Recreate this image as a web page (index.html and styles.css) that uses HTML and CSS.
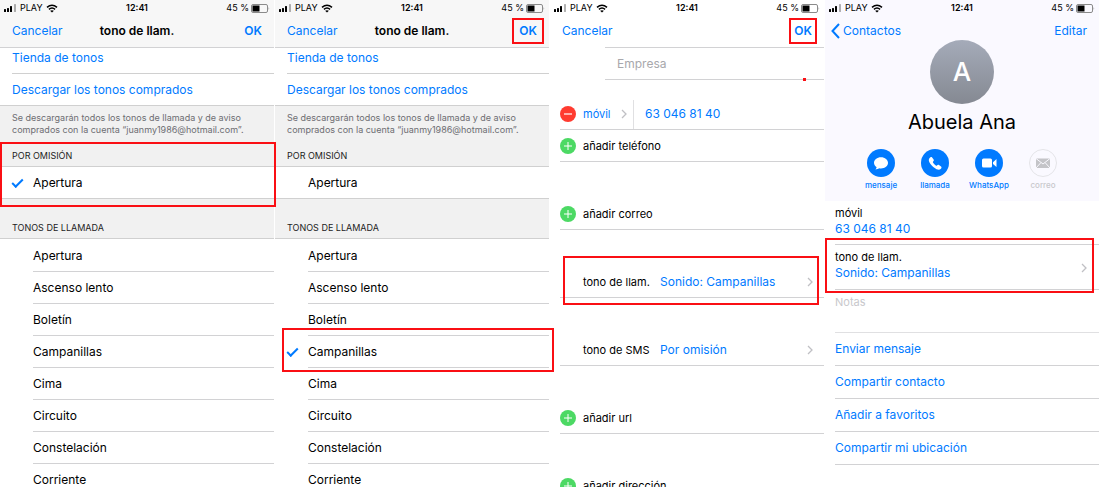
FILE: index.html
```html
<!DOCTYPE html>
<html lang="es">
<head>
  <meta charset="UTF-8">
  <meta name="viewport" content="width=device-width, initial-scale=1">
  <title>Cambiar el tono de llamada de un contacto</title>
  <link rel="stylesheet" href="styles.css">
</head>
<body>

<svg class="sprite" aria-hidden="true">
  <symbol id="signal" viewBox="0 0 13 8">
    <rect x="0" y="5" width="2" height="3" rx=".5"/>
    <rect x="3" y="4" width="2" height="4" rx=".5"/>
    <rect x="6" y="2" width="2" height="6" rx=".5"/>
    <rect x="10" y="0" width="2" height="8" rx=".5" opacity=".3"/>
  </symbol>
  <symbol id="wifi" viewBox="0 0 12 9">
    <path d="M1 3.4Q6-1 11 3.4M2.9 5.4Q6 2.7 9.1 5.4" fill="none" stroke="currentColor" stroke-width="1.5"/>
    <path d="M6 8.6 4.1 6.8Q6 5.5 7.9 6.8Z"/>
  </symbol>
  <symbol id="battery" viewBox="0 0 19 9">
    <rect x=".5" y=".5" width="16" height="8" rx="1.5" fill="none" stroke="#8a8a8a"/>
    <rect x="1.5" y="1.5" width="7" height="6"/>
    <path d="M17.6 3Q18.8 4.500 17.600 6Z" fill="#8a8a8a"/>
  </symbol>
  <symbol id="chevron" viewBox="0 0 6 10">
    <path d="M1 1 5 5 1 9" fill="none" stroke="#c0c0c4" stroke-width="1.3"/>
  </symbol>
  <symbol id="add" viewBox="0 0 16 16">
    <circle cx="8" cy="8" r="8" fill="#4cd964"/>
    <path d="M4 8h8M8 4v8" stroke="#fff" stroke-width="1"/>
  </symbol>
  <symbol id="remove" viewBox="0 0 16 16">
    <circle cx="8" cy="8" r="8" fill="#ff3b30"/>
    <path d="M4 8h8" stroke="#fff" stroke-width="1.2"/>
  </symbol>
</svg>

<main class="screens">

  <!-- Tono por omisión -->
  <section class="screen">
    <div class="topbar">
      <div class="status">
        <span class="carrier"><svg class="i-signal"><use href="#signal"/></svg>PLAY<svg class="i-wifi"><use href="#wifi"/></svg></span>
        <span class="clock">12:41</span>
        <span class="power">45 %<svg class="i-battery"><use href="#battery"/></svg></span>
      </div>
      <header class="nav">
        <button type="button">Cancelar</button>
        <h1>tono de llam.</h1>
        <button type="button" class="ok">OK</button>
      </header>
    </div>
    <div class="store">
      <button type="button" class="row first">Tienda de tonos</button>
      <button type="button" class="row">Descargar los tonos comprados</button>
    </div>
    <p class="note">Se descargarán todos los tonos de llamada y de aviso comprados con la cuenta “juanmy1986@hotmail.com”.</p>
    <div class="default mark mark-default">
      <h2>POR OMISIÓN</h2>
      <label class="tone"><input type="radio" name="tono1" checked><span>Apertura</span></label>
    </div>
    <h2 class="tones-title">TONOS DE LLAMADA</h2>
    <div class="tones">
      <label class="tone"><input type="radio" name="tono1"><span>Apertura</span></label>
      <label class="tone"><input type="radio" name="tono1"><span>Ascenso lento</span></label>
      <label class="tone"><input type="radio" name="tono1"><span>Boletín</span></label>
      <label class="tone"><input type="radio" name="tono1"><span>Campanillas</span></label>
      <label class="tone"><input type="radio" name="tono1"><span>Cima</span></label>
      <label class="tone"><input type="radio" name="tono1"><span>Circuito</span></label>
      <label class="tone"><input type="radio" name="tono1"><span>Constelación</span></label>
      <label class="tone"><input type="radio" name="tono1"><span>Corriente</span></label>
    </div>
  </section>

  <!-- Tono elegido -->
  <section class="screen">
    <div class="topbar">
      <div class="status">
        <span class="carrier"><svg class="i-signal"><use href="#signal"/></svg>PLAY<svg class="i-wifi"><use href="#wifi"/></svg></span>
        <span class="clock">12:41</span>
        <span class="power">45 %<svg class="i-battery"><use href="#battery"/></svg></span>
      </div>
      <header class="nav">
        <button type="button">Cancelar</button>
        <h1>tono de llam.</h1>
        <button type="button" class="ok mark mark-ok">OK</button>
      </header>
    </div>
    <div class="store">
      <button type="button" class="row first">Tienda de tonos</button>
      <button type="button" class="row">Descargar los tonos comprados</button>
    </div>
    <p class="note">Se descargarán todos los tonos de llamada y de aviso comprados con la cuenta “juanmy1986@hotmail.com”.</p>
    <div class="default">
      <h2>POR OMISIÓN</h2>
      <label class="tone"><input type="radio" name="tono2"><span>Apertura</span></label>
    </div>
    <h2 class="tones-title">TONOS DE LLAMADA</h2>
    <div class="tones">
      <label class="tone"><input type="radio" name="tono2"><span>Apertura</span></label>
      <label class="tone"><input type="radio" name="tono2"><span>Ascenso lento</span></label>
      <label class="tone"><input type="radio" name="tono2"><span>Boletín</span></label>
      <label class="tone mark mark-tone"><input type="radio" name="tono2" checked><span>Campanillas</span></label>
      <label class="tone"><input type="radio" name="tono2"><span>Cima</span></label>
      <label class="tone"><input type="radio" name="tono2"><span>Circuito</span></label>
      <label class="tone"><input type="radio" name="tono2"><span>Constelación</span></label>
      <label class="tone"><input type="radio" name="tono2"><span>Corriente</span></label>
    </div>
  </section>

  <!-- Editar contacto -->
  <section class="screen edit">
    <div class="status">
      <span class="carrier"><svg class="i-signal"><use href="#signal"/></svg>PLAY<svg class="i-wifi"><use href="#wifi"/></svg></span>
      <span class="clock">12:41</span>
      <span class="power">45 %<svg class="i-battery"><use href="#battery"/></svg></span>
    </div>
    <header class="nav">
      <button type="button">Cancelar</button>
      <button type="button" class="ok mark mark-ok2">OK</button>
    </header>
    <div class="company">
      <input type="text" placeholder="Empresa" aria-label="Empresa">
    </div>
    <div class="group">
      <div class="field">
        <button type="button" class="icon" aria-label="Eliminar"><svg><use href="#remove"/></svg></button>
        <label class="kind" for="tel">móvil</label>
        <svg class="i-chevron"><use href="#chevron"/></svg>
        <input type="tel" id="tel" value="63 046 81 40">
      </div>
      <button type="button" class="field"><svg class="i-add"><use href="#add"/></svg>añadir teléfono</button>
    </div>
    <div class="group">
      <button type="button" class="field"><svg class="i-add"><use href="#add"/></svg>añadir correo</button>
    </div>
    <div class="group">
      <button type="button" class="field sound mark mark-sound"><span class="name">tono de llam.</span><span class="value">Sonido: Campanillas</span><svg class="i-chevron"><use href="#chevron"/></svg></button>
    </div>
    <div class="group">
      <button type="button" class="field sound"><span class="name">tono de SMS</span><span class="value">Por omisión</span><svg class="i-chevron"><use href="#chevron"/></svg></button>
    </div>
    <div class="group">
      <button type="button" class="field"><svg class="i-add"><use href="#add"/></svg>añadir url</button>
    </div>
    <div class="group">
      <button type="button" class="field"><svg class="i-add"><use href="#add"/></svg>añadir dirección</button>
    </div>
  </section>

  <!-- Ficha del contacto -->
  <section class="screen contact">
    <div class="card">
      <div class="status">
        <span class="carrier"><svg class="i-signal"><use href="#signal"/></svg>PLAY<svg class="i-wifi"><use href="#wifi"/></svg></span>
        <span class="clock">12:41</span>
        <span class="power">45 %<svg class="i-battery"><use href="#battery"/></svg></span>
      </div>
      <header class="nav">
        <button type="button" class="back"><svg viewBox="0 0 9 16"><path d="M8 1 1.500 8 8 15" fill="none" stroke="currentColor" stroke-width="2"/></svg>Contactos</button>
        <button type="button">Editar</button>
      </header>
      <div class="avatar">A</div>
      <h1 class="fullname">Abuela Ana</h1>
      <div class="actions">
        <button type="button">
          <svg viewBox="0 0 28 28"><circle cx="14" cy="14" r="14" fill="#007aff"/><path d="M14 8.200c-4 0-7 2.500-7 5.600 0 1.900 1 3.500 2.600 4.400-.1.900-.6 1.700-1.200 2.200 1.500 0 2.800-.5 3.700-1.200.6.200 1.200.2 1.900.2 4 0 7-2.500 7-5.600s-3-5.600-7-5.600z" fill="#fff"/></svg>
          mensaje
        </button>
        <button type="button">
          <svg viewBox="0 0 28 28"><circle cx="14" cy="14" r="14" fill="#007aff"/><path d="M8.600 8.900c.9-1 1.900-1.200 2.500-.4l1.500 2c.5.7.3 1.400-.5 2.100-.4.300-.3.700 0 1.200.7 1.100 1.700 2 2.700 2.700.5.300.9.300 1.200-.1.600-.8 1.300-.9 2-.4l2 1.400c.9.700.5 1.700-.4 2.600-1.300 1.300-3.700.9-7-1.800-3.700-3.100-6.100-7.200-4-9.300z" fill="#fff"/></svg>
          llamada
        </button>
        <button type="button">
          <svg viewBox="0 0 28 28"><circle cx="14" cy="14" r="14" fill="#007aff"/><rect x="7" y="9.500" width="10" height="9" rx="1.500" fill="#fff"/><path d="M18 13.200 21.500 10v8L18 14.900z" fill="#fff"/></svg>
          WhatsApp
        </button>
        <button type="button" disabled>
          <svg viewBox="0 0 28 28"><circle cx="14" cy="14" r="13.500" fill="none" stroke="#e4e4e8"/><rect x="7" y="9.500" width="14" height="9.500" fill="#c4c4c8"/><path d="M7 9.500l7 5.500 7-5.500M7 19l5-5.500M21 19l-5-5.500" fill="none" stroke="#faf9ff" stroke-width="1"/></svg>
          correo
        </button>
      </div>
    </div>
    <div class="details">
      <div class="detail">
        <span>móvil</span>
        <a href="tel:630468140">63 046 81 40</a>
      </div>
      <div class="detail mark mark-detail">
        <span>tono de llam.</span>
        <a href="#tono">Sonido: Campanillas</a>
        <svg class="i-chevron"><use href="#chevron"/></svg>
      </div>
      <textarea class="notes" placeholder="Notas" aria-label="Notas"></textarea>
      <button type="button" class="option">Enviar mensaje</button>
      <button type="button" class="option">Compartir contacto</button>
      <button type="button" class="option">Añadir a favoritos</button>
      <button type="button" class="option">Compartir mi ubicación</button>
    </div>
  </section>

</main>

</body>
</html>
```
FILE: styles.css
```css
* {
  box-sizing: border-box;
}
body {
  margin: 0;
  font-family: Inter, 'Liberation Sans', sans-serif;
  font-size: 12px;
  line-height: 16px;
  color: #000;
  background: #fff;
}
h1, h2, p {
  margin: 0;
}
button, input, textarea {
  font: inherit;
  color: #007aff;
  background: none;
  border: none;
  border-radius: 0;
  padding: 0;
  margin: 0;
  text-align: left;
}
button {
  cursor: pointer;
}
a {
  color: #007aff;
  text-decoration: none;
}
svg {
  display: block;
  flex: none;
}
.sprite {
  position: absolute;
  width: 0;
  height: 0;
}
.screens {
  display: grid;
  grid-template-columns: repeat(4, 1fr);
  height: 100vh;
  overflow: hidden;
}
.screen {
  min-width: 0;
  border-right: 1px solid #fff;
}

/* status bar */
.status {
  display: grid;
  grid-template-columns: 1fr auto 1fr;
  align-items: center;
  height: 16px;
  padding: 0 4px;
  font-size: 9px;
  line-height: 16px;
}
.carrier, .power {
  display: flex;
  align-items: center;
}
.carrier {
  gap: 3px;
}
.power {
  gap: 2px;
  justify-content: flex-end;
}
.clock {
  font-weight: 600;
}
.i-signal { width: 13px; height: 8px; }
.i-wifi { width: 12px; height: 9px; }
.i-battery { width: 19px; height: 9px; }
.i-chevron { width: 6px; height: 10px; }

/* navigation bar */
.topbar {
  background: #f7f7f7;
  border-bottom: 1px solid #d2d2d4;
}
.nav {
  display: grid;
  grid-template-columns: 1fr auto 1fr;
  align-items: center;
  height: 31px;
  padding: 0 12px 2px;
}
.nav h1 {
  font-size: 12px;
  font-weight: 600;
}
.nav button {
  justify-self: start;
}
.nav button:last-child {
  grid-column: 3;
  justify-self: end;
}
.nav .ok {
  font-weight: 600;
}

/* tone list */
.store {
  border-bottom: 1px solid #d0d0d0;
}
.row {
  display: block;
  width: calc(100% - 12px);
  height: 31px;
  margin-left: 12px;
}
.row.first {
  height: 26px;
  padding-bottom: 6px;
  border-bottom: 1px solid #d0d0d0;
}
.note {
  height: 37px;
  padding: 6px 12px 0;
  font-size: 9px;
  line-height: 12px;
  color: #6d6d72;
  background: #f1f1f1;
}
h2 {
  padding: 0 12px;
  font-size: 9px;
  font-weight: 400;
  color: #222;
  background: #f1f1f1;
  border-bottom: 1px solid #d0d0d0;
}
.default h2 {
  height: 24px;
  padding-top: 5px;
}
.default .tone {
  border-bottom: 1px solid #d0d0d0;
}
.tones-title {
  height: 40px;
  padding-top: 21px;
}
.tones {
  padding-top: 1px;
}
.tone {
  display: flex;
  align-items: center;
  height: 32px;
}
.tone input {
  appearance: none;
  width: 33px;
  height: 10px;
}
.tone input:checked::before {
  content: "";
  display: block;
  width: 9px;
  height: 4px;
  margin: 1px 12px;
  border-left: 2px solid #007aff;
  border-bottom: 2px solid #007aff;
  transform: rotate(-45deg);
}
.tone span {
  flex: 1;
}
.tones .tone span {
  line-height: 31px;
  border-bottom: 1px solid #d2d2d4;
}

/* edit contact */
.company {
  position: relative;
  height: 33px;
  margin-left: 55px;
  padding-left: 12px;
  border-top: 1px solid #d2d2d4;
  border-bottom: 1px solid #d2d2d4;
}
.company::after {
  content: "";
  position: absolute;
  right: 18px;
  bottom: -2px;
  width: 3px;
  height: 3px;
  background: #fa0f14;
}
.company input {
  width: 100%;
  height: 30px;
}
::placeholder {
  color: #a8a8ac;
  opacity: 1;
}
.group {
  margin-bottom: 36px;
}
.company + .group {
  margin-top: 18px;
}
.field {
  display: flex;
  align-items: center;
  width: calc(100% - 10px);
  height: 32px;
  margin-left: 10px;
  font-size: 11px;
  color: #000;
  border-bottom: 1px solid #d2d2d4;
}
.field .icon svg, .i-add {
  width: 16px;
  height: 16px;
}
.field .icon, .i-add {
  margin-right: 7px;
}
.kind {
  width: 38px;
  color: #007aff;
}
.field input {
  flex: 1;
  min-width: 0;
  height: 29px;
  margin-left: 6px;
  padding: 0 0 3px 11px;
  align-self: flex-end;
  font-size: 12px;
  border-left: 1px solid #e0e0e2;
}
.sound {
  padding: 0 11px 0 23px;
}
.sound .name {
  width: 77px;
}
.sound .value {
  flex: 1;
  font-size: 12px;
  color: #007aff;
}

/* contact card */
.card {
  height: 201px;
  background: #faf9ff;
}
.back {
  display: flex;
  align-items: center;
  gap: 3px;
}
.contact .nav {
  padding: 0 12px 2px 6px;
}
.back svg {
  width: 9px;
  height: 16px;
}
.avatar {
  width: 64px;
  height: 64px;
  margin: -7px auto 0;
  border-radius: 50%;
  background: linear-gradient(#a5abb9, #858992);
  color: #fff;
  font-size: 26px;
  font-weight: 500;
  line-height: 64px;
  text-align: center;
}
.fullname {
  margin-top: 4px;
  font-size: 20px;
  font-weight: 400;
  line-height: 28px;
  text-align: center;
}
.actions {
  display: flex;
  justify-content: center;
  margin-top: 13px;
}
.actions button {
  display: flex;
  flex-direction: column;
  align-items: center;
  gap: 3px;
  width: 54px;
  font-size: 8px;
  font-weight: 500;
  line-height: 10px;
}
.actions svg {
  width: 28px;
  height: 28px;
}
.actions button:disabled {
  color: #c8c8cc;
}
.details {
  padding-left: 10px;
}
.detail {
  display: flex;
  flex-direction: column;
  height: 44px;
  padding-top: 4px;
  border-bottom: 1px solid #d2d2d4;
}
.detail + .detail {
  height: 45px;
}
.detail span {
  font-size: 11px;
}
.detail .i-chevron {
  position: absolute;
  right: 12px;
  top: 18px;
}
.notes {
  display: block;
  width: 100%;
  height: 43px;
  padding-top: 4px;
  font-size: 11px;
  resize: none;
  border-bottom: 1px solid #e0e0e2;
}
.notes::placeholder {
  color: #c8c8cc;
}
.option {
  display: block;
  width: 100%;
  height: 33px;
  border-bottom: 1px solid #d2d2d4;
}

/* red highlight boxes */
.mark {
  position: relative;
}
.mark::after {
  content: "";
  position: absolute;
  z-index: 1;
  border: 2px solid #fa0f14;
  pointer-events: none;
}
.mark-default::after { inset: -1px -2px -8px 0; }
.mark-tone::after { inset: -8px -5px -4px 7px; }
.mark-ok::after { inset: -5px -7px; }
.mark-ok2::after { inset: -5px -5px; }
.mark-sound::after { inset: -10px 5px -8px 3px; }
.mark-detail::after { inset: -7px 5px -4px -10px; }
```
